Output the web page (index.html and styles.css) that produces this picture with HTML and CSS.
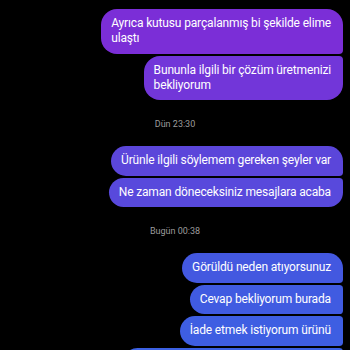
FILE: index.html
```html
<!DOCTYPE html>
<html lang="tr">
<head>
<meta charset="utf-8">
<link rel="stylesheet" href="styles.css">
</head>
<body>
<div class="chat">
  <div class="group">
    <div class="bubble first c1">Ayrıca kutusu parçalanmış bi şekilde elime<br>ulaştı</div>
    <div class="bubble last c2">Bununla ilgili bir çözüm üretmenizi<br>bekliyorum</div>
  </div>
  <div class="stamp">Dün 23:30</div>
  <div class="group">
    <div class="bubble first c3">Ürünle ilgili söylemem gereken şeyler var</div>
    <div class="bubble last c4">Ne zaman döneceksiniz mesajlara acaba</div>
  </div>
  <div class="stamp">Bugün 00:38</div>
  <div class="group">
    <div class="bubble first c5">Görüldü neden atıyorsunuz</div>
    <div class="bubble mid c6">Cevap bekliyorum burada</div>
    <div class="bubble mid c7">İade etmek istiyorum ürünü</div>
    <div class="bubble mid c8 partial"></div>
  </div>
</div>
</body>
</html>
```
FILE: styles.css
```css
html, body {
  margin: 0;
  padding: 0;
  background: #000;
  height: 350px;
  overflow: hidden;
}
.chat {
  display: flex;
  flex-direction: column;
  padding-top: 9px;
  font-family: Roboto, "Noto Sans", sans-serif;
}
.group {
  display: flex;
  flex-direction: column;
  align-items: flex-end;
  gap: 2px;
  padding-right: 7px;
}
.bubble {
  color: #fff;
  font-size: 12px;
  letter-spacing: -0.15px;
  line-height: 15px;
  padding: 7.25px 12px 7.25px 10px;
  border-radius: 16px;
  white-space: nowrap;
}
.partial {
  width: 198px;
  height: 15px;
}
.first { border-top-right-radius: 16px; border-bottom-right-radius: 4px; }
.last { border-top-right-radius: 4px; border-bottom-right-radius: 16px; }
.mid { border-top-right-radius: 4px; border-bottom-right-radius: 4px; }
.stamp {
  text-align: center;
  color: #9c9c9c;
  font-size: 9px;
  line-height: 14px;
  margin: 17px 0 15px;
}
.c1 { background: #7b2ed7; }
.c2 { background: #7236d9; }
.c3 { background: #5b46da; }
.c4 { background: #5849dc; }
.c5 { background: #4358e0; }
.c6 { background: #405be1; }
.c7 { background: #3e5ee2; }
.c8 { background: #3c61e3; }
```
